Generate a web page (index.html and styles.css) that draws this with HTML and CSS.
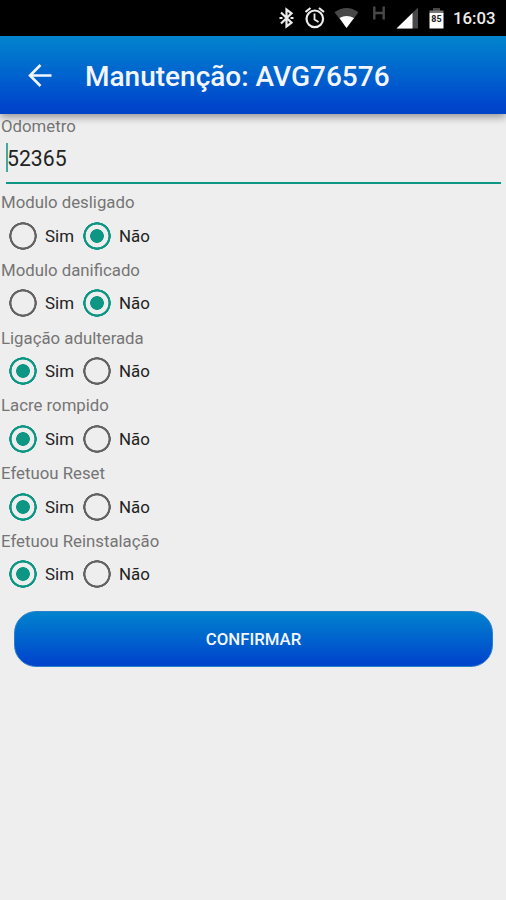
FILE: index.html
```html
<!DOCTYPE html>
<html lang="pt-BR">
<head>
<meta charset="utf-8">
<title>Manutenção</title>
<link rel="stylesheet" href="styles.css">
</head>
<body>
<div class="status">
  <svg class="status-icons" width="176" height="36" viewBox="0 0 176 36">
    <path d="M11 12.500L21.500 22.700 16.500 26.500V9.500L21.500 13.300 11 23.500" fill="none" stroke="#ededed" stroke-width="2.200"/>
    <path d="M9.500 18h3M20.500 18h3" stroke="#ededed" stroke-width="2.200"/>
    <g fill="none" stroke="#ededed" stroke-width="2.200">
      <circle cx="44.800" cy="18.800" r="8.300"/>
      <path d="M35.500 12l5-4M54 12l-5-4"/>
      <path d="M44.500 13.500v6l4 2.600" stroke-width="1.800"/>
    </g>
    <path d="M64.500 12.300Q76.500 3.800 88.500 12.300L76.500 28z" fill="#484848"/>
    <path d="M69.500 18Q76.500 13.800 84 18L76.500 28z" fill="#fff"/>
    <path d="M104.300 6.500v13M113.700 6.500v13M104 13h10" stroke="#484848" stroke-width="2.400" fill="none"/>
    <path d="M126.500 28.500L148 7.500v21z" fill="#484848"/>
    <path d="M126.500 28.500L142.500 13v15.500z" fill="#fff"/>
    <path d="M163 8h7v3h-7z" fill="#484848"/>
    <path d="M159.500 10.500h14v3h-14z" fill="#777"/>
    <path d="M159.500 13h14v15.500h-14z" fill="#fff"/>
    <text class="battery" x="166.500" y="22" text-anchor="middle">85</text>
  </svg>
  <span class="clock">16:03</span>
</div>
<header class="bar">
  <svg class="back" width="24" height="24" viewBox="0 0 24 24"><path d="M23.500 11.500H2.500M12.500 1L2 11.500 12.500 22" fill="none" stroke="#f2f5ff" stroke-width="2.600"/></svg>
  <h1 class="title">Manutenção: AVG76576</h1>
</header>
<main>
  <div class="label first">Odometro</div>
  <div class="field"><span class="caret"></span><span class="value">52365</span></div>
  <section class="group"><div class="label">Modulo desligado</div><div class="options"><span class="radio"></span><span class="opt">Sim</span><span class="radio on"></span><span class="opt">Não</span></div></section>
  <section class="group"><div class="label">Modulo danificado</div><div class="options"><span class="radio"></span><span class="opt">Sim</span><span class="radio on"></span><span class="opt">Não</span></div></section>
  <section class="group"><div class="label">Ligação adulterada</div><div class="options"><span class="radio on"></span><span class="opt">Sim</span><span class="radio"></span><span class="opt">Não</span></div></section>
  <section class="group"><div class="label">Lacre rompido</div><div class="options"><span class="radio on"></span><span class="opt">Sim</span><span class="radio"></span><span class="opt">Não</span></div></section>
  <section class="group"><div class="label">Efetuou Reset</div><div class="options"><span class="radio on"></span><span class="opt">Sim</span><span class="radio"></span><span class="opt">Não</span></div></section>
  <section class="group"><div class="label">Efetuou Reinstalação</div><div class="options"><span class="radio on"></span><span class="opt">Sim</span><span class="radio"></span><span class="opt">Não</span></div></section>
  <button class="confirm">CONFIRMAR</button>
</main>
</body>
</html>
```
FILE: styles.css
```css
* { box-sizing: border-box; }
body {
  margin: 0;
  height: 900px;
  overflow: hidden;
  background: #eee;
  font-family: Roboto, sans-serif;
}
.status {
  height: 36px;
  background: #000;
  display: flex;
  justify-content: flex-end;
  align-items: center;
  padding-right: 10px;
}
.status-icons { flex: none; margin-right: 7px; }
.clock {
  width: 43px;
  color: #eee;
  font-size: 16.8px;
  font-weight: 500;
  line-height: 36px;
  white-space: nowrap;
}
.battery { font-size: 9px; font-weight: 700; fill: #222; }
.bar {
  height: 78px;
  display: flex;
  align-items: center;
  padding: 1px 0 0 28px;
  background: linear-gradient(#0284cd, #0063ce 50%, #0045cc 90%, #0045c6);
  box-shadow: 0 3px 8px rgba(0, 0, 0, .38);
  position: relative;
}
.back { flex: none; margin-right: 33px; }
.title {
  margin: 0;
  padding-top: 3px;
  color: #f4f6ff;
  font-size: 28px;
  font-weight: 500;
  line-height: 40px;
  white-space: nowrap;
}
.label {
  height: 22px;
  padding-left: 1px;
  color: #757575;
  font-size: 16.8px;
  line-height: 22px;
  white-space: nowrap;
}
.first { margin-top: 2px; line-height: 21px; }
.field {
  height: 46px;
  margin: 0 5px 0 6px;
  border-bottom: 2px solid #0c9683;
  display: flex;
  align-items: flex-start;
}
.caret { width: 2px; height: 29px; margin: 5px -1px 0 0; background: #45a899; }
.value { color: #222; font-size: 21.2px; line-height: 41px; }
.field + .group { margin-top: 7px; }
.group { height: 67.8px; }
.options { display: flex; align-items: center; height: 45px; padding-left: 9px; }
.radio {
  flex: none;
  width: 28px;
  height: 28px;
  border-radius: 50%;
  background: radial-gradient(circle closest-side, transparent 11.2px, #636363 11.8px, #636363 13.6px, transparent 14px);
}
.radio.on {
  background: radial-gradient(circle closest-side, #0c9683 6.5px, transparent 7.2px, transparent 11.1px, #0c9683 11.7px, #0c9683 13.6px, transparent 14px);
}
.opt {
  width: 38px;
  margin-left: 8px;
  color: #222;
  font-size: 16.9px;
  line-height: 24px;
}
.confirm {
  display: block;
  width: 479px;
  height: 56px;
  margin: 13px 0 0 14px;
  padding: 0;
  border: 1px solid #2a80c8;
  border-radius: 22px;
  background: linear-gradient(#0284cd, #0063ce 50%, #0045cc 92%);
  background-origin: border-box;
  color: #f4f6ff;
  font: 500 16.8px/54px Roboto, sans-serif;
}
```
